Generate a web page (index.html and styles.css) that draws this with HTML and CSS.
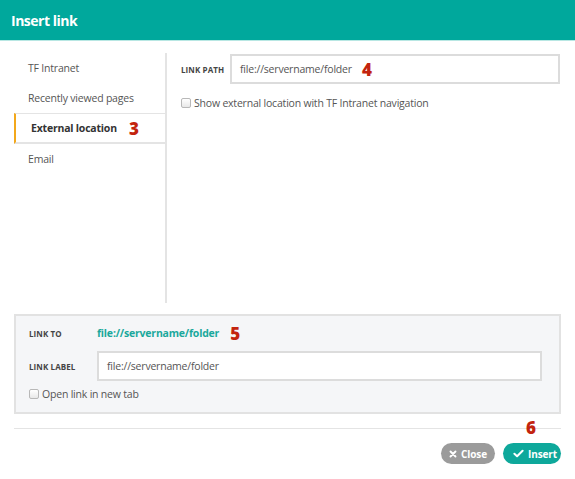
FILE: index.html
```html
<!DOCTYPE html>
<html>
<head>
<meta charset="utf-8">
<link rel="stylesheet" href="styles.css">
</head>
<body>
<div class="dialog">
  <header class="header"><h1 class="title">Insert link</h1></header>
  <div class="body">
    <div class="main">
      <nav class="nav">
        <div class="nav-item">TF Intranet</div>
        <div class="nav-item">Recently viewed pages</div>
        <div class="nav-item active">External location <span class="num num-3">3</span></div>
        <div class="nav-item">Email</div>
      </nav>
      <section class="pane">
        <div class="field-row">
          <label class="label">LINK PATH</label>
          <div class="input input-path">file://servername/folder <span class="num num-4">4</span></div>
        </div>
        <label class="check"><span class="box"></span>Show external location with TF Intranet navigation</label>
      </section>
    </div>
    <div class="summary">
      <div class="sum-row sum-first">
        <span class="label label-w">LINK TO</span>
        <span class="link">file://servername/folder</span>
        <span class="num num-5">5</span>
      </div>
      <div class="sum-row">
        <span class="label label-w">LINK LABEL</span>
        <div class="input input-label">file://servername/folder</div>
      </div>
      <label class="check check-tab"><span class="box"></span>Open link in new tab</label>
    </div>
    <div class="footer">
      <span class="num num-6">6</span>
      <div class="buttons">
        <button class="btn btn-close"><svg class="ico" width="8" height="8" viewBox="0 0 8 8"><path d="M1.5 1.5 6.5 6.5M6.5 1.5 1.5 6.5" stroke="#fff" stroke-width="1.9" stroke-linecap="round"/></svg>Close</button>
        <button class="btn btn-insert"><svg class="ico" width="11" height="9" viewBox="0 0 11 9"><path d="M1.4 4.7 4.1 7.2 9.6 1.7" fill="none" stroke="#fff" stroke-width="2" stroke-linecap="round" stroke-linejoin="round"/></svg>Insert</button>
      </div>
    </div>
  </div>
</div>
</body>
</html>
```

FILE: styles.css
```css
* { box-sizing: border-box; }
html, body { margin: 0; padding: 0; background: #fff; }
body { font-family: "Open Sans", "Noto Sans", sans-serif; color: #444; font-size: 10.5px; letter-spacing: -0.2px; width: 575px; height: 479px; overflow: hidden; }
.header { background: #00a89c; height: 41px; border-bottom: 1px solid #b8e7e3; display: flex; align-items: center; padding-left: 11px; }
.title { margin: 0; color: #fff; font-size: 14px; font-weight: 700; letter-spacing: -0.5px; }
.body { padding: 12px 14px 0 14px; }
.main { display: flex; height: 250px; }
.nav { width: 153px; border-right: 2px solid #e4e4e4; flex: none; }
.nav-item { height: 30px; display: flex; align-items: center; padding-left: 14px; color: #555; }
.nav-item.active { border-left: 2px solid #f3a81b; border-top: 1px solid #e4e4e4; border-bottom: 2px solid #e4e4e4; padding-left: 15px; font-weight: 700; color: #333; height: 31px; }
.num { color: #c3240e; font-weight: 800; font-size: 17px; font-family: "Open Sans", sans-serif; line-height: 1; letter-spacing: 0; }
.num-3 { margin-left: 12px; margin-top: 1px; }
.num-4 { margin-left: 10px; }
.pane { flex: 1; padding-left: 14px; }
.field-row { display: flex; align-items: center; margin-top: 1px; }
.label { font-size: 8px; font-weight: 700; color: #444; letter-spacing: 0.1px; }
.field-row .label { width: 49px; flex: none; }
.input { border: 2px solid #dcdcdc; background: #fff; height: 30px; display: flex; align-items: center; padding-left: 8px; color: #555; }
.input-path { width: 330px; }
.check { display: flex; align-items: center; margin-top: 12px; color: #555; }
.box { width: 10px; height: 10px; border: 1px solid #b8b8b8; border-radius: 2px; background: linear-gradient(#fff, #e8e8e8); margin-right: 3px; flex: none; }
.summary { background: #f5f6f8; border: 2px solid #e2e2e2; height: 100px; margin-top: 11px; padding: 7px 0 0 13px; }
.sum-row { display: flex; align-items: center; }
.sum-first { height: 20px; margin-bottom: 8px; }
.label-w { width: 68px; flex: none; }
.link { color: #1aa89c; font-weight: 700; }
.num-5 { margin-left: 11px; }
.input-label { width: 445px; height: 30px; }
.check-tab { margin-top: 6px; }
.footer { border-top: 1px solid #e4e4e4; margin-top: 14px; height: 60px; position: relative; }
.num-6 { position: absolute; right: 25px; top: -10px; }
.buttons { display: flex; justify-content: flex-end; gap: 8px; padding-top: 14px; }
.btn { border: none; height: 21px; border-radius: 11px; color: #fff; font-family: inherit; font-weight: 700; font-size: 10px; letter-spacing: -0.1px; display: flex; align-items: center; gap: 4px; padding: 0 8px; }
.ico { flex: none; display: block; }
.btn-close { background: #9b9b9b; width: 54px; }
.btn-insert { background: #0ea89b; width: 58px; padding-left: 10px; }
```
